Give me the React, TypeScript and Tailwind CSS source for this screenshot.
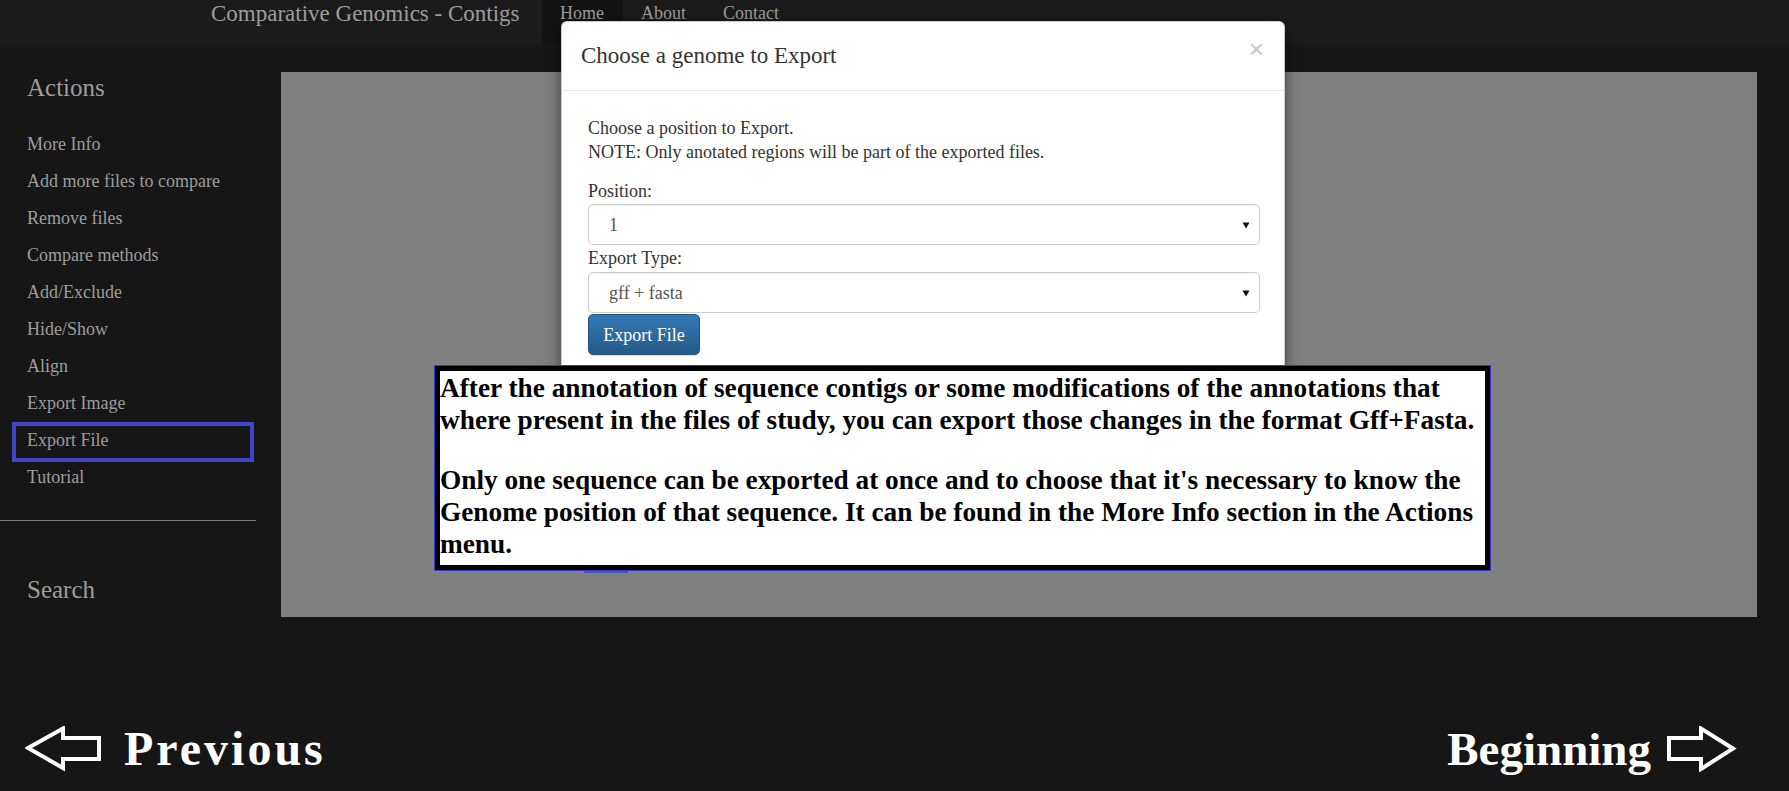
import React from "react";

const serif = { fontFamily: '"Liberation Serif", "Times New Roman", serif' } as const;

function Caret() {
  return (
    <svg width="8" height="9" viewBox="0 0 8 9" className="absolute right-[9px] top-1/2 -translate-y-1/2">
      <path d="M0.5 2 L7.5 2 L4 8 Z" fill="#111" />
    </svg>
  );
}

function SelectBox({ value }: { value: string }) {
  return (
    <div className="relative h-[41px] w-[672px] rounded-[5px] border border-[#cccccc] bg-white shadow-[inset_0_1px_1px_rgba(0,0,0,0.075)] flex items-center pl-[20px] text-[18px] text-[#555555]">
      {value}
      <Caret />
    </div>
  );
}

export default function App() {
  const items = [
    "More Info",
    "Add more files to compare",
    "Remove files",
    "Compare methods",
    "Add/Exclude",
    "Hide/Show",
    "Align",
    "Export Image",
    "Export File",
    "Tutorial",
  ];
  return (
    <div className="relative w-full h-[791px] bg-[#161616] overflow-hidden flex flex-col" style={serif}>
      {/* Navbar */}
      <div className="h-[45px] shrink-0 bg-[#1b1b1b] flex items-start">
        <div className="ml-[211px] mt-[0px] h-[28px] leading-[28px] text-[23px] text-[#9d9d9d] whitespace-nowrap">
          Comparative Genomics - Contigs
        </div>
        <div className="ml-[22px] flex h-[45px]">
          <div className="h-[45px] bg-[#131313] px-[18.5px] text-[18px] leading-[26px] text-[#9d9d9d]">Home</div>
          <div className="h-[45px] px-[18.5px] text-[18px] leading-[26px] text-[#9d9d9d]">About</div>
          <div className="h-[45px] px-[18.5px] text-[18px] leading-[26px] text-[#9d9d9d]">Contact</div>
        </div>
      </div>

      {/* Content row */}
      <div className="flex h-[655px] shrink-0">
        <div className="w-[256px] shrink-0 pt-[18px]">
          <div className="h-[50px] leading-[50px] pl-[27px] text-[25px] text-[#9d9d9d]">Actions</div>
          <div className="mt-[13px]">
            {items.map((it) => (
              <div key={it} className="relative h-[37px] flex items-center pl-[27px] text-[18px] text-[#9d9d9d] whitespace-nowrap">
                {it}
                {it === "Export File" && (
                  <span className="absolute left-[12px] top-[0px] w-[242px] h-[40px] border-[4px] border-[#4343c9]" />
                )}
              </div>
            ))}
          </div>
          <div className="mt-[24px] h-px bg-[#7a7a7a]" />
          <div className="mt-[44px] h-[50px] leading-[50px] pl-[27px] text-[25px] text-[#9d9d9d]">Search</div>
        </div>
        <div className="ml-[25px] mt-[27px] w-[1476px] h-[545px] bg-[#808080]" />
      </div>

      {/* Bottom navigation */}
      <div className="flex-1 flex items-start justify-between">
        <div className="flex items-center mt-[24px] ml-[25px]">
          <svg width="78" height="46" viewBox="0 0 78 46">
            <path d="M3 22 L38 2.5 L38 12 L74 12 L74 33 L38 33 L38 42 Z" fill="none" stroke="#fff" strokeWidth="4" strokeLinejoin="miter" />
          </svg>
          <div className="ml-[21px] text-[48px] font-bold text-white tracking-[3px] leading-[50px]">Previous</div>
        </div>
        <div className="flex items-center mt-[24px] mr-[52px]">
          <div className="text-[47px] font-bold text-white leading-[50px]">Beginning</div>
          <svg width="70" height="46" viewBox="0 0 70 46" className="ml-[16px]">
            <path d="M2 12 L34 12 L34 2.5 L66 22.5 L34 43 L34 33 L2 33 Z" fill="none" stroke="#fff" strokeWidth="4" strokeLinejoin="miter" />
          </svg>
        </div>
      </div>

      {/* Modal */}
      <div className="absolute left-[561px] top-[21px] w-[724px] h-[380px] bg-white rounded-[6px] shadow-[0_5px_15px_rgba(0,0,0,0.5)] border border-[rgba(0,0,0,0.2)]">
        <div className="relative h-[69px] border-b border-[#e5e5e5] flex items-center pl-[19px]">
          <div className="text-[23px] text-[#333333] leading-[26px]">Choose a genome to Export</div>
          <div className="absolute right-[20px] top-[14px] text-[26px] leading-[27px] text-[#c8c8c8]" style={{ fontFamily: '"Liberation Sans", Arial, sans-serif' }}>
            ×
          </div>
        </div>
        <div className="pl-[26px] pt-[25px] text-[18px] text-[#333333] leading-[24px]">
          <div>Choose a position to Export.</div>
          <div>NOTE: Only anotated regions will be part of the exported files.</div>
          <div className="mt-[15px]">Position:</div>
          <div className="mt-[1px]">
            <SelectBox value="1" />
          </div>
          <div className="mt-[1px]">Export Type:</div>
          <div className="mt-[2px]">
            <SelectBox value="gff + fasta" />
          </div>
          <div className="mt-[1px] inline-flex h-[41px] w-[112px] items-center justify-center rounded-[5px] border border-[#245580] bg-gradient-to-b from-[#337ab7] to-[#265a88] text-white text-[18px] shadow-[0_1px_1px_rgba(0,0,0,0.15)]">
            Export File
          </div>
        </div>
      </div>

      {/* Tutorial box */}
      <div className="absolute left-[434px] top-[365px] w-[1057px] h-[206px] border border-[#3636c8]">
        <div className="w-full h-full border-[5px] border-black bg-white pt-[1px] text-[27.3px] font-bold leading-[32px] text-black whitespace-nowrap">
          <div>
            After the annotation of sequence contigs or some modifications of the annotations that
            <br />
            where present in the files of study, you can export those changes in the format Gff+Fasta.
          </div>
          <div className="mt-[28px]">
            Only one sequence can be exported at once and to choose that it's necessary to know the
            <br />
            Genome position of that sequence. It can be found in the More Info section in the Actions
            <br />
            menu.
          </div>
        </div>
      </div>
      <div className="absolute left-[584px] top-[571px] w-[44px] h-[2px] bg-[#3b5fa8]" />
    </div>
  );
}
